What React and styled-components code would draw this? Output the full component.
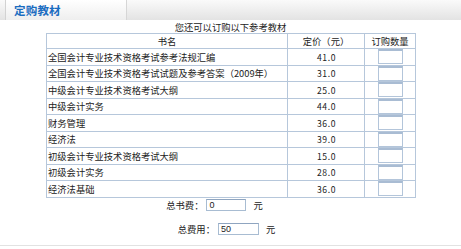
import React from "react";
import styled, { createGlobalStyle } from "styled-components";

const GlobalStyle = createGlobalStyle`
  body {
    margin: 0;
    background: #fff;
    font-family: "Noto Sans CJK SC", "Liberation Sans", sans-serif;
    color: #222;
  }
`;

const Page = styled.div`
  width: 461px;
  height: 246px;
  border-bottom: 1px solid #e2e2e2;
  box-sizing: border-box;
`;

const TitleBar = styled.div`
  height: 20px;
  display: flex;
  background: linear-gradient(#fafafa, #e3e3e3);
`;

const Tab = styled.div`
  margin-left: 5px;
  width: 122px;
  display: flex;
  align-items: center;
  padding-left: 8px;
  box-sizing: border-box;
  background: linear-gradient(#ffffff, #eeeeee);
  border-left: 1px solid #d2d2d2;
  border-right: 1px solid #d6d6d6;
  color: #1a6cc0;
  font-weight: bold;
  font-size: 11.5px;
  letter-spacing: 0.2px;
`;

const Notice = styled.div`
  text-align: center;
  font-size: 9.3px;
  line-height: 11px;
  margin-top: 2px;
`;

const Books = styled.table`
  margin-left: 46px;
  border-collapse: collapse;
  width: 366px;
  table-layout: fixed;
  font-size: 9.3px;
`;

const Head = styled.th`
  height: 13px;
  padding: 0;
  font-weight: normal;
  border: 1px solid #b6c7db;
  width: ${p => p.$w}px;
`;

const Cell = styled.td`
  height: 15.5px;
  padding: 0 0 0 1px;
  border: 1px solid #b6c7db;
  text-align: ${p => (p.$center ? "center" : "left")};
  white-space: nowrap;
  overflow: hidden;
`;

const Price = styled(Cell)`
  letter-spacing: 0.6px;
  font-size: 8.6px;
`;

const QtyBox = styled.input`
  display: block;
  margin: 0 auto;
  width: 25px;
  height: 15px;
  padding: 0;
  box-sizing: border-box;
  border: 1px solid #b3c5da;
  border-top: 2px solid #a9bcd3;
  background: #fff;
`;

const Totals = styled.div`
  display: flex;
  flex-direction: column;
  align-items: center;
  margin-top: 0;
  gap: 10px;
  font-size: 9.3px;
`;

const TotalRow = styled.div`
  display: flex;
  align-items: center;
  gap: 3px;
  margin-left: ${p => p.$shift}px;
`;

const TotalBox = styled.input`
  width: ${p => p.$w}px;
  height: 12px;
  padding: 0 2px;
  box-sizing: border-box;
  border: 1px solid #a8bcd2;
  border-top-color: #8fa5c0;
  font-family: "Liberation Sans", sans-serif;
  font-size: 9px;
  color: #222;
  margin-right: 4px;
`;

const books = [
  ["全国会计专业技术资格考试参考法规汇编", "41.0"],
  ["全国会计专业技术资格考试试题及参考答案（2009年）", "31.0"],
  ["中级会计专业技术资格考试大纲", "25.0"],
  ["中级会计实务", "44.0"],
  ["财务管理", "36.0"],
  ["经济法", "39.0"],
  ["初级会计专业技术资格考试大纲", "15.0"],
  ["初级会计实务", "28.0"],
  ["经济法基础", "36.0"],
];

export default function App() {
  return (
    <Page>
      <GlobalStyle />
      <TitleBar>
        <Tab>定购教材</Tab>
      </TitleBar>
      <Notice>您还可以订购以下参考教材</Notice>
      <Books>
        <thead>
          <tr>
            <Head $w={240}>书名</Head>
            <Head $w={76}>定价（元）</Head>
            <Head $w={50}>订购数量</Head>
          </tr>
        </thead>
        <tbody>
          {books.map(([name, price]) => (
            <tr key={name}>
              <Cell>{name}</Cell>
              <Price $center>{price}</Price>
              <Cell $center>
                <QtyBox type="text" />
              </Cell>
            </tr>
          ))}
        </tbody>
      </Books>
      <Totals>
        <TotalRow $shift={-32}>
          总书费：<TotalBox $w={40} defaultValue="0" />元
        </TotalRow>
        <TotalRow $shift={-8}>
          总费用：<TotalBox $w={41} defaultValue="50" />元
        </TotalRow>
      </Totals>
    </Page>
  );
}
